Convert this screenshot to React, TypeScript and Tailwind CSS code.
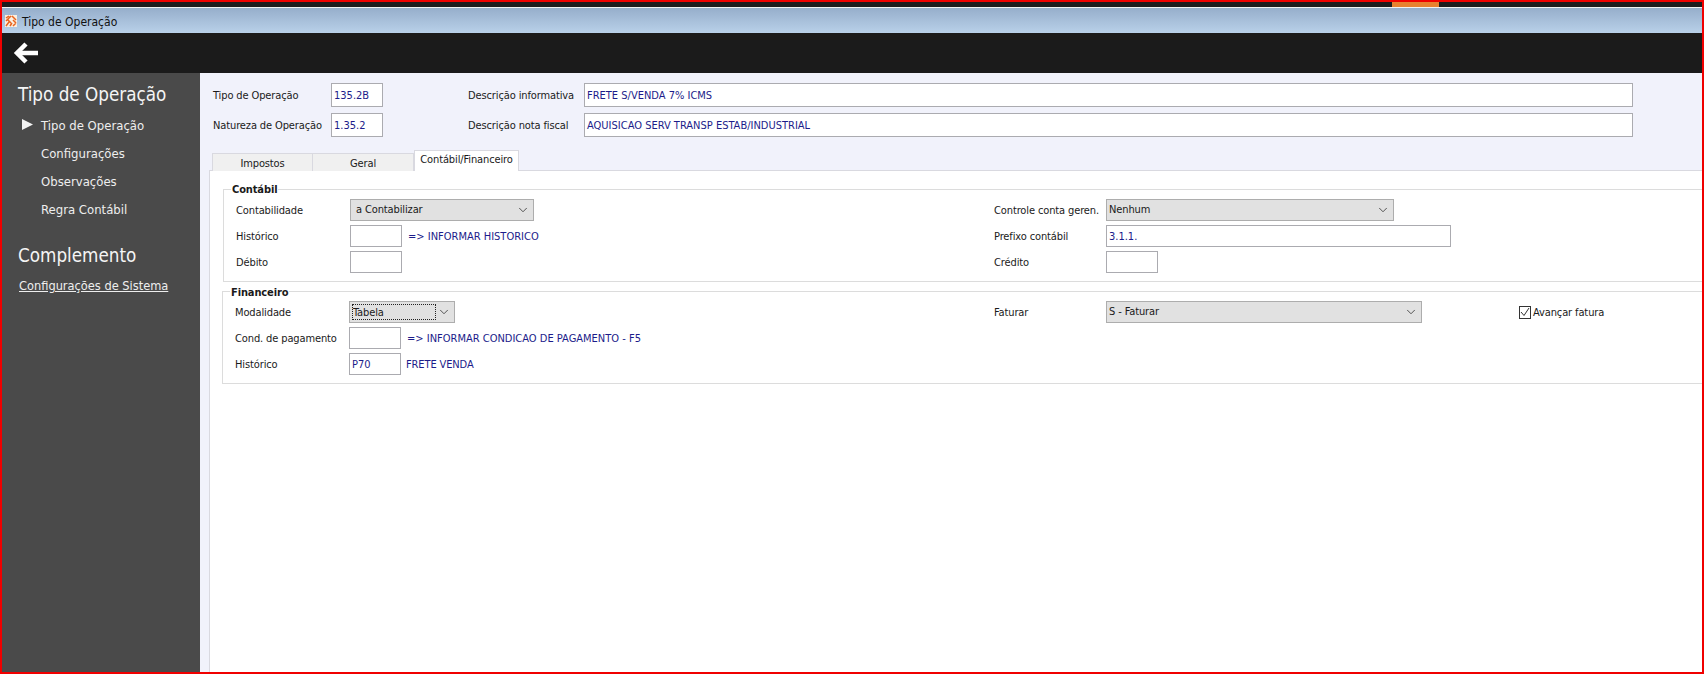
import { ChevronDown } from "lucide-react";

const FONT = "font-['DejaVu_Sans_Condensed','DejaVu_Sans',sans-serif]";

function TextBox({ value, className = "" }: { value?: string; className?: string }) {
  return (
    <div className={`h-[22px] bg-white border border-[#ababb0] pl-[2px] pt-[2px] flex items-center text-[11px] tracking-normal text-[#1c1c8a] ${className}`}>
      {value}
    </div>
  );
}

function Select({ value, className = "" }: { value: string; className?: string }) {
  return (
    <div className={`h-[22px] bg-[#e1e1e1] border border-[#adadad] pl-[2px] pr-[3px] flex items-center justify-between text-[11px] text-[#1a1a1a] ${className}`}>
      <span className="pt-px">{value}</span>
      <ChevronDown className="w-[14px] h-[14px] text-[#333]" strokeWidth={1.4} />
    </div>
  );
}

function SideLink({ label, active }: { label: string; active?: boolean }) {
  return (
    <div className="h-[28px] flex items-center relative pl-[39px] text-[13px] text-[#eeeeee]">
      {active && (
        <svg className="absolute left-[20px] top-[7px] w-[11px] h-[11px]" viewBox="0 0 11 11" fill="#f4f4f4">
          <path d="M0 0 L11 5.5 L0 11 Z" />
        </svg>
      )}
      {label}
    </div>
  );
}

export default function App() {
  return (
    <div className={`h-screen w-screen overflow-hidden flex flex-col border-2 border-[#f00000] bg-white ${FONT}`}>
      {/* Barra superior do sistema */}
      <div className="h-[5px] bg-[#1c1c1e] shrink-0 flex pl-[1390px]">
        <div className="w-[47px] bg-[#e8812f]" />
      </div>
      <div className="h-px bg-[#f2f2f2] shrink-0" />

      {/* Titulo da janela */}
      <div className="h-[25px] shrink-0 bg-gradient-to-b from-[#96aecb] to-[#b9d1e9] flex items-center pl-[3px] gap-[5px] text-[12px] text-[#111]">
        <svg className="w-[12px] h-[12px]" viewBox="0 0 12 12">
          <rect width="12" height="12" fill="#fbeee0" />
          <path d="M1 3l3-2M1 6l5-5M7 1l4 4M3 5l3 3M8 5l3 3M1 11l3-4M5 11l2-3M8 11l3-3" stroke="#e8641e" strokeWidth="1.5" fill="none" />
        </svg>
        <span className="pt-[2px]">Tipo de Operação</span>
      </div>

      {/* Barra de voltar */}
      <div className="h-[40px] shrink-0 bg-[#1b1b1b] flex items-center pl-[11px]">
        <svg className="w-[25px] h-[22px]" viewBox="0 0 25 22" fill="none" stroke="#ffffff" strokeWidth="4.5">
          <path d="M25 11H4" />
          <path d="M13 2L4 11l9 9" />
        </svg>
      </div>

      <div className="flex-1 flex min-h-0">
        {/* Menu lateral */}
        <aside className="w-[198px] shrink-0 bg-[#4a4a4a] text-white pt-[9px]">
          <h1 className="pl-[16px] text-[18.7px] leading-[26px] text-[#f5f5f5]">Tipo de Operação</h1>
          <div className="mt-[4px]">
            <SideLink label="Tipo de Operação" active />
            <SideLink label="Configurações" />
            <SideLink label="Observações" />
            <SideLink label="Regra Contábil" />
          </div>
          <h2 className="pl-[16px] mt-[19px] text-[18.7px] leading-[26px] text-[#f5f5f5]">Complemento</h2>
          <a className="block ml-[17px] mt-[8px] text-[12.7px] leading-[18px] text-[#eeeeee] underline">Configurações de Sistema</a>
        </aside>

        <main className="flex-1 min-w-0 bg-[#f1f2fb] flex flex-col pt-[10px] text-[11px] tracking-[-0.12px] text-[#1a1a1a]">
          {/* Cabecalho */}
          <div className="pl-[13px] grid grid-cols-[118px_52px_85px_116px_1049px] grid-rows-[24px_24px] gap-y-[6px] items-center [&>span]:pt-[2px]">
            <span>Tipo de Operação</span>
            <TextBox value="135.2B" className="h-[24px]" />
            <span />
            <span>Descrição informativa</span>
            <TextBox value="FRETE S/VENDA 7% ICMS" className="h-[24px]" />
            <span>Natureza de Operação</span>
            <TextBox value="1.35.2" className="h-[24px]" />
            <span />
            <span>Descrição nota fiscal</span>
            <TextBox value="AQUISICAO SERV TRANSP ESTAB/INDUSTRIAL" className="h-[24px]" />
          </div>

          {/* Abas */}
          <div className="ml-[12px] mt-[14px] h-[20px] flex items-end relative z-10 -mb-px">
            <div className="w-[101px] h-[18px] flex items-center justify-center bg-[#f0f0f0] border border-b-0 border-[#d9d9e0] pt-[3px]">Impostos</div>
            <div className="w-[101px] h-[18px] flex items-center justify-center bg-[#f0f0f0] border border-b-0 border-l-0 border-[#d9d9e0] pt-[3px]">Geral</div>
            <div className="w-[105px] h-[21px] flex items-center justify-center bg-white border border-b-0 border-[#d9d9e0] pb-[1px]">Contábil/Financeiro</div>
          </div>

          {/* Painel */}
          <div className="flex-1 ml-[9px] bg-white border-l border-t border-[#d9d9e0] pt-[10px]">
            <fieldset className="ml-[13px] border border-r-0 border-[#dcdcdc] pl-[12px] pb-[8px]">
              <legend className="-ml-[5px] px-px font-bold leading-[16px] translate-y-px">Contábil</legend>
              <div className="pt-[2px] grid grid-cols-[114px_644px_112px_1fr] grid-rows-[22px_22px_22px] gap-y-[4px] items-center [&>span]:pt-[2px]">
                <span>Contabilidade</span>
                <Select value="a Contabilizar" className="w-[184px] pl-[5px]" />
                <span>Controle conta geren.</span>
                <Select value="Nenhum" className="w-[288px]" />
                <span>Histórico</span>
                <div className="flex items-center gap-[6px] text-[#1c1c8a] tracking-normal">
                  <TextBox className="w-[52px]" />
                  <span className="pt-[2px]">=&gt; INFORMAR HISTORICO</span>
                </div>
                <span>Prefixo contábil</span>
                <TextBox value="3.1.1." className="w-[345px]" />
                <span>Débito</span>
                <TextBox className="w-[52px]" />
                <span>Crédito</span>
                <TextBox className="w-[52px]" />
              </div>
            </fieldset>

            <fieldset className="ml-[12px] mt-[1px] border border-r-0 border-[#dcdcdc] pl-[12px] pb-[8px]">
              <legend className="-ml-[5px] px-px font-bold leading-[16px] translate-y-[2px]">Financeiro</legend>
              <div className="pt-[2px] grid grid-cols-[114px_645px_112px_1fr] grid-rows-[22px_22px_22px] gap-y-[4px] items-center [&>span]:pt-[2px]">
                <span>Modalidade</span>
                <div className="w-[106px] h-[22px] bg-[#e1e1e1] border border-[#adadad] flex items-center justify-between pl-[2px] pr-[3px]">
                  <span className="w-[84px] h-[16px] border border-dotted border-[#222] leading-[15px]">Tabela</span>
                  <ChevronDown className="w-[14px] h-[14px] text-[#333]" strokeWidth={1.4} />
                </div>
                <span>Faturar</span>
                <div className="flex items-center">
                  <Select value="S - Faturar" className="w-[316px]" />
                  <label className="ml-[97px] flex items-center gap-[2px]">
                    <span className="w-[12px] h-[13px] border border-[#333] bg-white flex items-center justify-center">
                      <svg className="w-[10px] h-[10px]" viewBox="0 0 10 10" fill="none" stroke="#333" strokeWidth="1">
                        <path d="M1 5l3 3.5L9 1" />
                      </svg>
                    </span>
                    <span className="pt-[2px]">Avançar fatura</span>
                  </label>
                </div>
                <span>Cond. de pagamento</span>
                <div className="flex items-center gap-[6px] text-[#1c1c8a] tracking-normal">
                  <TextBox className="w-[52px]" />
                  <span className="pt-[2px]">=&gt; INFORMAR CONDICAO DE PAGAMENTO - F5</span>
                </div>
                <span />
                <span />
                <span>Histórico</span>
                <div className="flex items-center gap-[5px] text-[#1c1c8a]">
                  <TextBox value="P70" className="w-[52px]" />
                  <span className="pt-[2px]">FRETE VENDA</span>
                </div>
              </div>
            </fieldset>
          </div>
        </main>
      </div>
    </div>
  );
}
